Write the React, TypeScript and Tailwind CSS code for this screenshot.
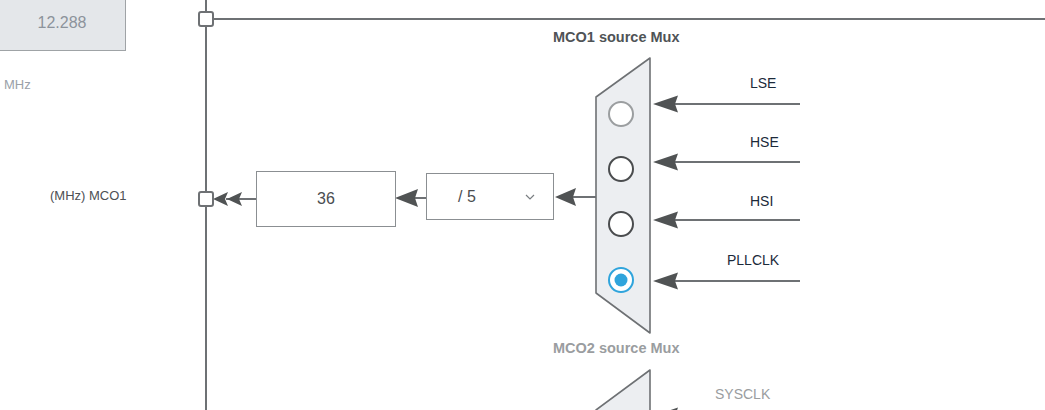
import React from "react";

const LINE = "#6e7174";
const HEAD = "#505354";

// left-pointing arrow head, tip at (x, y)
function Head({ x, y, len = 24, half = 8 }: { x: number; y: number; len?: number; half?: number }) {
  return <polygon points={`${x},${y} ${x + len},${y - half} ${x + len - 3},${y} ${x + len},${y + half}`} fill={HEAD} />;
}

const inputs = [
  { label: "LSE", y: 104, indent: "ml-[23px]" },
  { label: "HSE", y: 162, indent: "ml-[23px]" },
  { label: "HSI", y: 220, indent: "ml-[23px]" },
  { label: "PLLCLK", y: 281, indent: "ml-0" },
];

const radios = [
  { y: 114, state: "disabled" },
  { y: 169, state: "off" },
  { y: 224, state: "off" },
  { y: 280, state: "on" },
];

export default function App() {
  return (
    <div className="relative w-[1045px] h-[410px] overflow-hidden bg-white" style={{ fontFamily: '"Liberation Sans", Arial, sans-serif' }}>
      {/* wires and mux shapes */}
      <svg className="absolute inset-0" width={1045} height={410}>
        <line x1={206} y1={0} x2={206} y2={410} stroke={LINE} strokeWidth={2} />
        <line x1={206} y1={19} x2={1045} y2={19} stroke={LINE} strokeWidth={2} />

        {/* MCO1 output path */}
        <line x1={226} y1={199} x2={257} y2={199} stroke={LINE} strokeWidth={2} />
        <Head x={213} y={199} len={15} half={7} />
        <Head x={227} y={199} len={15} half={7} />
        <line x1={410} y1={198} x2={426} y2={198} stroke={LINE} strokeWidth={2} />
        <Head x={395} y={198} len={23} half={9} />
        <line x1={570} y1={197} x2={597} y2={197} stroke={LINE} strokeWidth={2} />
        <Head x={555} y={197} len={21} half={9} />

        {/* MCO1 mux */}
        <polygon points="596,97 650,58 650,333 596,293" fill="#eceef1" stroke={LINE} strokeWidth={1.6} strokeLinejoin="round" />
        {radios.map((r) =>
          r.state === "on" ? (
            <g key={r.y}>
              <circle cx={621} cy={r.y} r={12} fill="white" stroke="#2fa4dc" strokeWidth={2} />
              <circle cx={621} cy={r.y} r={6.5} fill="#2fa4dc" />
            </g>
          ) : (
            <circle key={r.y} cx={621} cy={r.y} r={12} fill="white" stroke={r.state === "disabled" ? "#9b9ea0" : "#4a4c4e"} strokeWidth={2} />
          )
        )}
        {inputs.map((i) => (
          <g key={i.label}>
            <line x1={670} y1={i.y} x2={800} y2={i.y} stroke={LINE} strokeWidth={2} />
            <Head x={653} y={i.y} len={25} half={8.5} />
          </g>
        ))}

        {/* MCO2 mux (cut off) */}
        <polygon points="596,410 650,370 650,420 596,420" fill="#eceef1" stroke={LINE} strokeWidth={1.6} strokeLinejoin="round" />
        <Head x={653} y={416} len={25} half={8.5} />

        {/* junction squares */}
        <rect x={199} y={12} width={14} height={14} rx={2} fill="white" stroke={LINE} strokeWidth={2} />
        <rect x={199} y={192} width={14} height={14} rx={2} fill="white" stroke={LINE} strokeWidth={2} />
      </svg>

      {/* frequency readout */}
      <div className="absolute left-[-2px] top-[-12px] flex flex-col">
        <div className="w-[128px] h-[63px] bg-[#e4e7ea] border border-[#9fa3a6] flex items-center justify-center pt-[7px] text-[16px] text-[#8c939b]">
          12.288
        </div>
        <div className="mt-[24px] ml-[6px] text-[13px] text-[#9aa1a8]">MHz</div>
      </div>

      <div className="absolute left-[50px] top-[186px] text-[13px] text-[#4d5054]">(MHz) MCO1</div>

      {/* output value and prescaler */}
      <div className="absolute left-[256px] top-[171px] w-[140px] h-[56px] bg-white border border-[#8b8f92] flex items-center justify-center text-[16px] text-[#4a4d50]">
        36
      </div>
      <div className="absolute left-[426px] top-[173px] w-[128px] h-[47px] bg-white border border-[#8b8f92] flex items-center text-[16px] text-[#4a4d50]">
        <span className="ml-[31px]">/ 5</span>
        <svg className="ml-auto mr-[18px]" width={10} height={6} viewBox="0 0 10 6">
          <path d="M1 1 L5 5 L9 1" fill="none" stroke="#7a7e82" strokeWidth={1.2} />
        </svg>
      </div>

      <div className="absolute left-[553px] top-[27px] text-[14.5px] font-bold text-[#4f5356]">MCO1 source Mux</div>
      <div className="absolute left-[553px] top-[338px] text-[14.5px] font-bold text-[#9a9da0]">MCO2 source Mux</div>

      {/* mux input labels */}
      <div className="absolute left-[727px] top-[75px] flex flex-col items-start gap-[42px] text-[14px] text-[#1c2a3a]">
        {inputs.map((i) => (
          <div key={i.label} className={`h-[17px] leading-[17px] ${i.indent}`}>{i.label}</div>
        ))}
      </div>
      <div className="absolute left-[715px] top-[384px] text-[14px] text-[#9a9da0]">SYSCLK</div>
    </div>
  );
}
